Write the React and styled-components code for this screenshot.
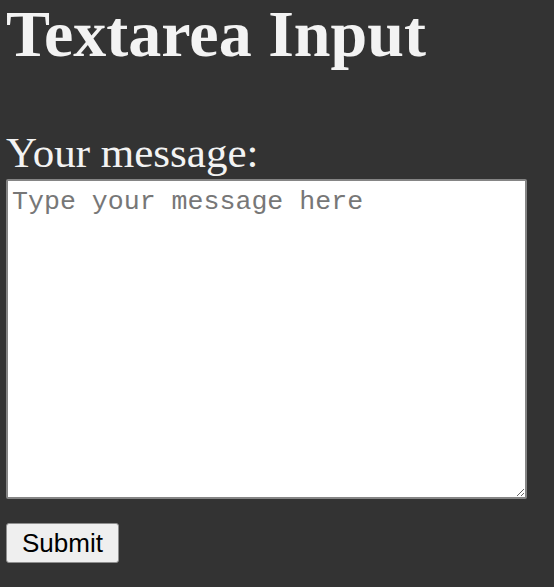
import React from 'react';
import styled, { createGlobalStyle } from 'styled-components';

const GlobalStyle = createGlobalStyle`
  html, body {
    margin: 0;
    background: #333333;
  }
`;

const Page = styled.div`
  padding: 0 6px;
  font-family: "Liberation Serif", "Times New Roman", serif;
  color: #f3f3f3;
`;

const Title = styled.h1`
  margin: 0;
  padding-top: 2px;
  font-size: 66px;
  line-height: 64px;
  font-weight: bold;
`;

const Form = styled.form`
  display: flex;
  flex-direction: column;
  align-items: flex-start;
  margin-top: 64px;
`;

const Label = styled.label`
  display: block;
  font-size: 43px;
  line-height: 46px;
`;

const MessageBox = styled.textarea`
  box-sizing: border-box;
  width: 521px;
  height: 320px;
  margin-top: 3px;
  padding: 6px 4px 4px;
  border: 2px solid #858585;
  border-radius: 2px;
  background: #ffffff;
  font-family: "Liberation Mono", "Courier New", monospace;
  font-size: 26.6px;
  color: #222;

  &::placeholder {
    color: #777777;
  }
`;

const SubmitButton = styled.button`
  box-sizing: border-box;
  width: 113px;
  height: 40px;
  margin-top: 24px;
  padding: 0;
  border: 1px solid #8f8f8f;
  border-radius: 3px;
  background: #efefef;
  font-family: "Liberation Sans", Arial, sans-serif;
  font-size: 26px;
  color: #000;
`;

export default function App() {
  return (
    <Page>
      <GlobalStyle />
      <Title>Textarea Input</Title>
      <Form onSubmit={e => e.preventDefault()}>
        <Label htmlFor="message">Your message:</Label>
        <MessageBox id="message" placeholder="Type your message here" />
        <SubmitButton type="submit">Submit</SubmitButton>
      </Form>
    </Page>
  );
}
